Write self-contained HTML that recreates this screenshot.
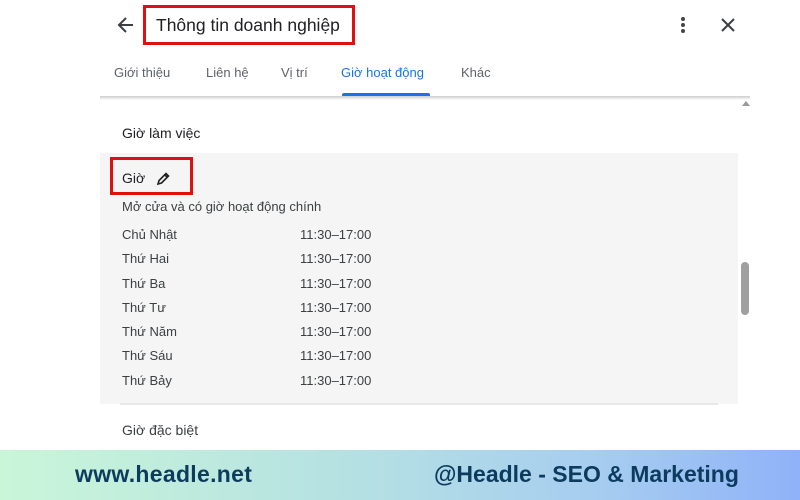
<!DOCTYPE html>
<html><head><meta charset="utf-8"><style>
*{margin:0;padding:0;box-sizing:border-box}
body{width:800px;height:500px;position:relative;background:#fff;font-family:"Liberation Sans",Arial,sans-serif;color:#3c4043;overflow:hidden}
.a{position:absolute;white-space:nowrap}
.row{font-size:13px;color:#3c4043}
</style></head><body>
<svg class="a" style="left:117px;top:16px" width="18" height="18" viewBox="0 0 18 18"><path d="M16 9H3M9 2L2 9l7 7" stroke="#3c4043" stroke-width="2" fill="none"/></svg>
<div class="a" style="left:143px;top:5px;width:212px;height:40px;border:3px solid #e01010"></div>
<div class="a" style="left:156px;top:15px;font-size:17.5px;color:#202124">Thông tin doanh nghiệp</div>
<div class="a" style="left:681px;top:17px;width:4px;height:4px;border-radius:2px;background:#444;box-shadow:0 6px 0 #444,0 12px 0 #444"></div>
<svg class="a" style="left:720px;top:17px" width="16" height="16" viewBox="0 0 16 16"><path d="M2 2L14 14M14 2L2 14" stroke="#3c4043" stroke-width="2"/></svg>
<div class="a" style="left:114px;top:65px;font-size:13px;color:#5f6368">Giới thiệu</div>
<div class="a" style="left:206px;top:65px;font-size:13px;color:#5f6368">Liên hệ</div>
<div class="a" style="left:281px;top:65px;font-size:13px;color:#5f6368">Vị trí</div>
<div class="a" style="left:341px;top:65px;font-size:13px;color:#1a73e8">Giờ hoạt động</div>
<div class="a" style="left:461px;top:65px;font-size:13px;color:#5f6368">Khác</div>
<div class="a" style="left:342px;top:93px;width:88px;height:3px;background:#1a73e8;border-radius:2px 2px 0 0"></div>
<div class="a" style="left:100px;top:96px;width:650px;height:4px;background:linear-gradient(#ccc,#fff)"></div>
<div class="a" style="left:742px;top:101px;width:0;height:0;border-left:4px solid transparent;border-right:4px solid transparent;border-bottom:5px solid #999"></div>
<div class="a" style="left:741px;top:262px;width:8px;height:53px;background:#a0a0a0;border-radius:4px"></div>
<div class="a" style="left:122px;top:125px;font-size:14px;color:#202124">Giờ làm việc</div>
<div class="a" style="left:100px;top:153px;width:638px;height:251px;background:#f5f5f5"></div>
<div class="a" style="left:120px;top:403px;width:598px;height:2px;background:#e8e8e8"></div>
<div class="a" style="left:110px;top:157px;width:83px;height:38px;border:3px solid #e01010"></div>
<div class="a" style="left:122px;top:170px;font-size:14px;color:#202124">Giờ</div>
<svg class="a" style="left:155px;top:171px" width="16" height="16" viewBox="0 0 16 16"><path d="M3 13l1-3.5 7-7 2.5 2.5-7 7z M10 4l2 2" stroke="#202124" stroke-width="1.6" fill="none"/></svg>
<div class="a row" style="left:122px;top:199px">Mở cửa và có giờ hoạt động chính</div>
<div class="a row" style="left:122px;top:223px;line-height:24.3px">Chủ Nhật<br>Thứ Hai<br>Thứ Ba<br>Thứ Tư<br>Thứ Năm<br>Thứ Sáu<br>Thứ Bảy</div>
<div class="a row" style="left:300px;top:223px;line-height:24.3px">11:30–17:00<br>11:30–17:00<br>11:30–17:00<br>11:30–17:00<br>11:30–17:00<br>11:30–17:00<br>11:30–17:00</div>
<div class="a" style="left:122px;top:422px;font-size:14px;color:#3c4043">Giờ đặc biệt</div>
<div class="a" style="left:0;top:450px;width:800px;height:50px;background:linear-gradient(90deg,#c9f6d9,#b5e0e3 45%,#a6cdf0 75%,#8fb2f8)"></div>
<div class="a" style="left:75px;top:461px;font-size:23px;font-weight:bold;color:#0d3b5e;letter-spacing:0.3px">www.headle.net</div>
<div class="a" style="left:434px;top:461px;font-size:23px;font-weight:bold;color:#0d3b5e">@Headle - SEO &amp; Marketing</div>
</body></html>
